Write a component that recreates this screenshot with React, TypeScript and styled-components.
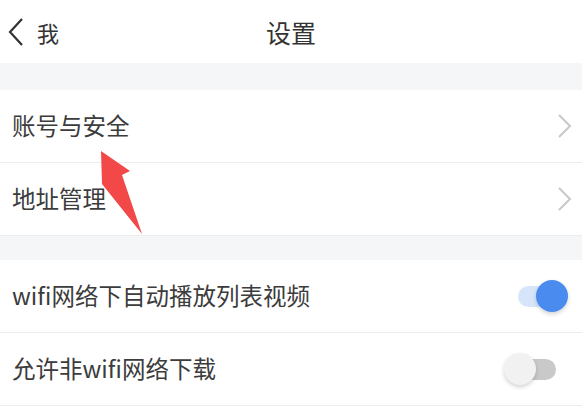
import React from "react";
import styled, { createGlobalStyle } from "styled-components";

const Global = createGlobalStyle`
  html, body { margin: 0; padding: 0; background: #ffffff; }
  body { font-family: "Noto Sans CJK SC", "Noto Sans", sans-serif; }
  * { box-sizing: border-box; }
`;

const Page = styled.div`
  position: relative;
  width: 582px;
  height: 408px;
  overflow: hidden;
  background: #ffffff;
  color: #3a3a3a;
`;

const Header = styled.header`
  height: 63px;
  display: grid;
  grid-template-columns: 1fr auto 1fr;
  align-items: center;
  background: #ffffff;
`;

const Back = styled.div`
  display: flex;
  align-items: center;
  gap: 13px;
  padding-left: 8px;
  font-size: 22px;
  color: #333;
  line-height: 1;
`;

const Title = styled.h1`
  margin: 0;
  font-size: 25px;
  font-weight: 400;
  color: #333;
  line-height: 1;
  padding-top: 2px;
`;

const Band = styled.div<{ $h: number }>`
  height: ${(p) => p.$h}px;
  background: #f5f6f8;
`;

const Group = styled.section`
  background: #ffffff;
`;

const Row = styled.div`
  height: 73px;
  display: flex;
  align-items: center;
  justify-content: space-between;
  padding: 0 9px 0 12px;
  border-bottom: 1px solid #ececec;
`;

const Label = styled.span`
  font-size: 23.5px;
  color: #3c3c3c;
  line-height: 1;
`;

const SwitchBox = styled.div`
  position: relative;
  width: 64px;
  height: 32px;
  margin-right: 5px;
`;

const Track = styled.div<{ $on: boolean }>`
  position: absolute;
  left: 14px;
  top: 6px;
  width: 38px;
  height: 21px;
  border-radius: 11px;
  background: ${(p) => (p.$on ? "#d7e5fb" : "#c9c9c9")};
`;

const Knob = styled.div<{ $on: boolean }>`
  position: absolute;
  top: 0;
  ${(p) => (p.$on ? "right: 0;" : "left: 0;")}
  width: 32px;
  height: 32px;
  border-radius: 50%;
  background: ${(p) => (p.$on ? "#4a8bf0" : "#f1f1f1")};
  box-shadow: 0 2px 4px rgba(0, 0, 0, 0.18);
`;

const Arrow = styled.svg`
  position: absolute;
  left: 0;
  top: 0;
  pointer-events: none;
`;

const Chevron = () => (
  <svg width="16" height="24" viewBox="0 0 16 24">
    <polyline points="2,1 13,12 2,23" fill="none" stroke="#c8c8c8" strokeWidth="2" strokeLinejoin="miter" />
  </svg>
);

const BackIcon = () => (
  <svg width="16" height="28" viewBox="0 0 16 28">
    <polyline points="14,1 2,14 14,27" fill="none" stroke="#333" strokeWidth="2.2" />
  </svg>
);

const Switch = ({ on }: { on: boolean }) => (
  <SwitchBox>
    <Track $on={on} />
    <Knob $on={on} />
  </SwitchBox>
);

export default function App() {
  return (
    <Page>
      <Global />
      <Header>
        <Back>
          <BackIcon />
          <span>我</span>
        </Back>
        <Title>设置</Title>
        <div />
      </Header>
      <Band $h={27} />
      <Group>
        <Row>
          <Label>账号与安全</Label>
          <Chevron />
        </Row>
        <Row>
          <Label>地址管理</Label>
          <Chevron />
        </Row>
      </Group>
      <Band $h={24} />
      <Group>
        <Row>
          <Label>wifi网络下自动播放列表视频</Label>
          <Switch on={true} />
        </Row>
        <Row>
          <Label>允许非wifi网络下载</Label>
          <Switch on={false} />
        </Row>
      </Group>
      <Arrow width="582" height="408" viewBox="0 0 582 408">
        <polygon points="101,151 130,171 122,175 142,234 102,184" fill="#f24848" />
      </Arrow>
    </Page>
  );
}
